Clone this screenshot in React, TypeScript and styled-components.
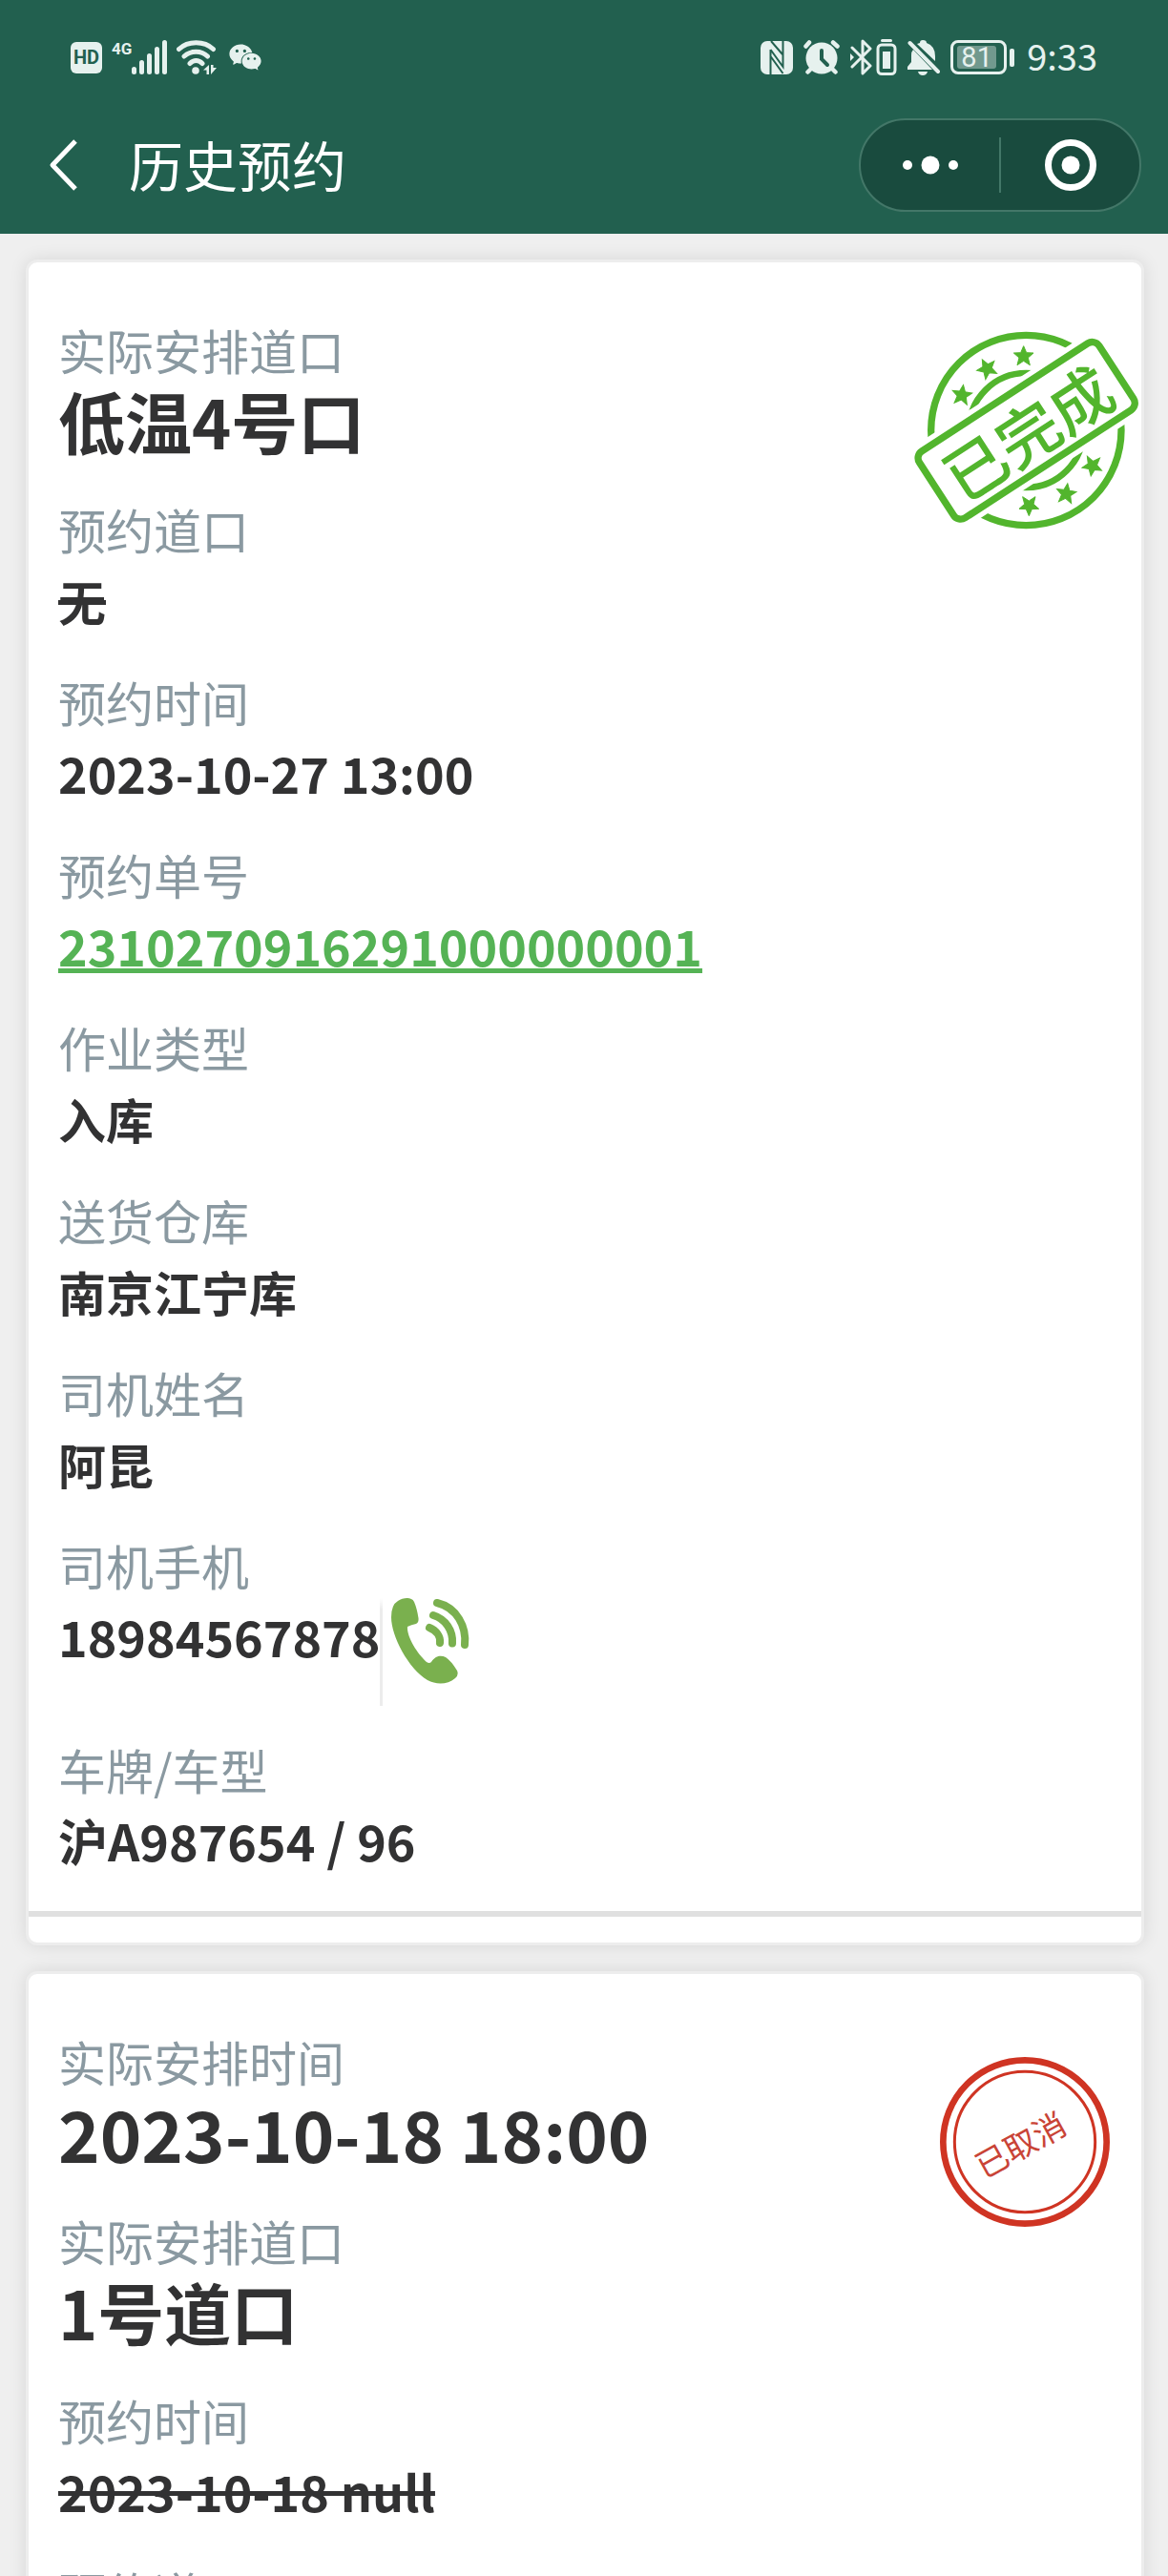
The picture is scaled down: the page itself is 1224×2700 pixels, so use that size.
import React from "react";
import styled, { createGlobalStyle, css } from "styled-components";
import { AiFillWechat } from "react-icons/ai";

const cjk = `"Noto Sans CJK SC", "Noto Sans", sans-serif`;
const glyph = "#e6f1ee";

const GlobalStyle = createGlobalStyle`
  *, *::before, *::after { box-sizing: border-box; }
  body { margin: 0; background: #efefef; font-family: ${cjk}; color: #323233; }
  button { font: inherit; color: inherit; background: none; border: 0; padding: 0; cursor: pointer; }
  svg { display: block; flex: none; }
`;

const Screen = styled.div`
  display: flex;
  flex-direction: column;
  height: 100vh;
  overflow: hidden;
`;

const Header = styled.header`
  flex: none;
  padding-bottom: 20px;
  background: #22604f;
  color: #fff;
`;

const StatusBar = styled.div`
  display: flex;
  align-items: center;
  justify-content: space-between;
  height: 120px;
  padding: 0 74px;
  color: ${glyph};
`;

const StatusGroup = styled.div<{ $gap: number }>`
  display: flex;
  align-items: center;
  gap: ${(p) => p.$gap}px;
`;

const HdBadge = styled.span`
  display: flex;
  align-items: center;
  justify-content: center;
  width: 33px;
  height: 33px;
  border-radius: 6px;
  background: ${glyph};
  color: #22604f;
  font: 700 20px/33px Roboto, sans-serif;
`;

const Signal = styled.span`
  display: flex;
  align-items: flex-start;
  height: 36px;
`;

const Network = styled.span`
  font: 700 17px/18px Roboto, sans-serif;
`;

const Battery = styled.span`
  display: flex;
  align-items: center;
  gap: 3px;
`;

const BatteryBody = styled.span`
  display: flex;
  align-items: center;
  width: 59px;
  height: 36px;
  padding: 4px;
  border: 3px solid ${glyph};
  border-radius: 8px;
`;

const BatteryLevel = styled.span`
  display: flex;
  align-items: center;
  justify-content: center;
  width: 41px;
  height: 24px;
  border-radius: 3px;
  background: #71998e;
  font: 400 29px/24px Roboto, sans-serif;
`;

const BatteryTip = styled.span`
  width: 5px;
  height: 19px;
  border-radius: 2px;
  background: ${glyph};
`;

const Clock = styled.time`
  padding: 0 0 4px 2px;
  font: 400 38px/48px ${cjk};
`;

const NavBar = styled.nav`
  display: flex;
  align-items: center;
  height: 105px;
  padding: 0 28px 0 50px;
`;

const BackButton = styled.button`
  display: flex;
  align-items: center;
  width: 85px;
  height: 80px;
`;

const Title = styled.h1`
  flex: 1;
  margin: 0;
  padding-bottom: 4px;
  font-size: 57px;
  font-weight: 400;
  line-height: 80px;
`;

const Capsule = styled.div`
  display: flex;
  align-items: center;
  width: 296px;
  height: 98px;
  border: 2px solid #437768;
  border-radius: 49px;
  background: #194b3e;
`;

const CapsuleButton = styled.button`
  display: flex;
  flex: 1;
  align-items: center;
  justify-content: center;
  height: 100%;
`;

const CapsuleDivider = styled.span`
  width: 2px;
  height: 58px;
  background: #437768;
`;

const List = styled.main`
  display: flex;
  flex: 1;
  flex-direction: column;
  gap: 27px;
  min-height: 0;
  padding: 27px 25px 27px 27px;
  overflow-y: auto;
  scrollbar-width: none;
`;

const Card = styled.article`
  position: relative;
  flex: none;
  border: 3px solid #ededed;
  border-radius: 12px;
  background: #fff;
  box-shadow: 0 0 18px rgba(0, 0, 0, 0.1);
`;

const Fields = styled.dl`
  margin: 0;
  padding: 56px 31px 3px;
`;

const Field = styled.div<{ $headline?: boolean }>`
  padding-bottom: ${(p) => (p.$headline ? 38 : 31)}px;
`;

const Label = styled.dt`
  color: #8a99a1;
  font-size: 50px;
  line-height: 70px;
`;

type Tone = { $headline?: boolean; $numeric?: boolean; $struck?: boolean };

const Value = styled.dd<Tone>`
  display: flex;
  margin: 0;
  font-size: ${(p) => (p.$headline ? (p.$numeric ? 74 : 70) : p.$numeric ? 52 : 50)}px;
  font-weight: 700;
  line-height: 80px;
  ${(p) =>
    p.$struck &&
    css`
      text-decoration: line-through;
      text-decoration-thickness: 5px;
    `}
`;

const OrderLink = styled.a`
  color: #55b355;
  text-decoration: underline;
  text-decoration-thickness: 5px;
  text-underline-offset: 2px;
  text-decoration-skip-ink: none;
`;

const PhoneDivider = styled.span`
  width: 3px;
  height: 113px;
  background: linear-gradient(#fff, #ececec 12px);
`;

const CallButton = styled.button`
  display: flex;
  align-items: flex-start;
  height: 90px;
  padding-left: 9px;
`;

const CardFooter = styled.footer`
  height: 33px;
  border-top: 6px solid #e0e0e0;
`;

const Stamp = styled.div<{ $top: number; $right: number }>`
  position: absolute;
  top: ${(p) => p.$top}px;
  right: ${(p) => p.$right}px;
`;

const StampText = styled.text`
  font-family: ${cjk};
  text-anchor: middle;
  dominant-baseline: central;
`;

const SignalIcon = () => (
  <svg width="37" height="36" viewBox="0 0 37 36" fill={glyph}>
    <rect x="0" y="28" width="5" height="8" rx="2.5" />
    <rect x="8" y="21" width="5" height="15" rx="2.5" />
    <rect x="16" y="14" width="5" height="22" rx="2.5" />
    <rect x="24" y="7" width="5" height="29" rx="2.5" />
    <rect x="32" y="0" width="5" height="36" rx="2.5" />
  </svg>
);

const WifiIcon = () => (
  <svg width="43" height="36" viewBox="0 0 43 36" fill="none" stroke={glyph} strokeWidth="5" strokeLinecap="round">
    <path d="M2.5 9.500C12 .5 29 .5 38.500 9.500M8 17C15 10.500 26 10.500 32.500 17M14 24.500C18 20.500 23 20.500 27 24.500" />
    <circle cx="20" cy="32" r="3.800" fill={glyph} stroke="none" />
    <path d="M28 31.500L34 26V36H31.500V31.500ZM36 26V36L42 29H38.500V26Z" fill={glyph} stroke="none" />
  </svg>
);

const NfcIcon = () => (
  <svg width="34" height="35" viewBox="0 0 34 35">
    <rect width="34" height="35" rx="7" fill={glyph} />
    <path d="M10.500 9V35M10.500 9L23.500 27V0M10.500 16L23.500 34M11 0L23 14" fill="none" stroke="#22604f" strokeWidth="2" />
  </svg>
);

const AlarmIcon = () => (
  <svg width="38" height="36" viewBox="0 0 38 36" fill="none" stroke={glyph} strokeLinecap="round">
    <circle cx="19" cy="19" r="16.500" fill={glyph} stroke="none" />
    <path d="M2.500 6.500L6 2.500M31 2.500L35.500 6.500M7 31L4.500 33.500M31 31L33.500 33.500" strokeWidth="4.500" />
    <path d="M19 11V20L25 26" stroke="#22604f" strokeWidth="4" />
  </svg>
);

const BluetoothIcon = () => (
  <svg width="49" height="38" viewBox="0 0 49 38" fill="none" stroke={glyph} strokeWidth="3" strokeLinejoin="round" strokeLinecap="round">
    <path d="M2 9L21 28L13 36V2L21 10L2 29" />
    <path d="M0 15L4 19L0 23Z" fill={glyph} stroke="none" />
    <rect x="29" y="6" width="18" height="30.500" rx="4" />
    <rect x="34" y="13" width="8" height="18" fill={glyph} stroke="none" />
    <path d="M33.500 1.500H42.500" />
  </svg>
);

const MutedIcon = () => (
  <svg width="34" height="37" viewBox="0 0 34 37" fill={glyph}>
    <path d="M16 0Q20 0 20 3Q29 6 29 17V22L10 4L13 3Q13 0 16 0Z" />
    <path d="M6 10L26 31H0V28L4 23V16Q4 12 6 10Z" />
    <path d="M11 33H21Q20 37 16 37Q12 37 11 33Z" />
    <path d="M2.500 3L32 33" stroke={glyph} strokeWidth="4" strokeLinecap="round" />
  </svg>
);

const BackIcon = () => (
  <svg width="32" height="54" viewBox="0 0 32 54" fill="none" stroke="#fff" strokeWidth="5">
    <path d="M29 2L5 27L29 52" strokeLinejoin="round" />
  </svg>
);

const MoreIcon = () => (
  <svg width="58" height="20" viewBox="0 0 58 20" fill="#fff">
    <circle cx="5" cy="10" r="5" />
    <circle cx="29" cy="10" r="9.500" />
    <circle cx="53" cy="10" r="5" />
  </svg>
);

const CloseIcon = () => (
  <svg width="56" height="56" viewBox="0 0 56 56">
    <circle cx="28" cy="28" r="23.500" fill="none" stroke="#fff" strokeWidth="7" />
    <circle cx="28" cy="28" r="9.500" fill="#fff" />
  </svg>
);

const CallIcon = () => (
  <svg width="83" height="90" viewBox="0 0 83 90" fill="#7ab04e">
    <path d="M7 3C12 0 21-2 24 4Q27 11 28.500 21Q29 26 26 27Q21 28 17 30C16 40 27 58 37 67Q40 69 42 67C47 60 52 60 57 62Q63 66 69 76Q71 81 67 84C59 91 47 91 38 86C18 74 0 40 0 20Q0 7 7 3Z" />
    <path d="M48 5C69 10 79 30 77 49M44 18C57 22 65 34 64 47.500M40 31C47 34 52 40 51 47" fill="none" stroke="#7ab04e" strokeWidth="8" strokeLinecap="round" />
  </svg>
);

const star = "M0-32L9-11L31-10L14 5L20 28L0 15L-20 28L-14 5L-31-10L-9-11Z";
const stars = [
  { x: 321, y: 520, turn: 8 },
  { x: 400, y: 437, turn: -28 },
  { x: 515, y: 398, turn: 0 },
  { x: 731, y: 743, turn: 188 },
  { x: 649, y: 830, turn: 8 },
  { x: 532, y: 868, turn: 180 },
];

const CompletedStamp = () => (
  <Stamp $top={72} $right={1}>
    <svg width="238" height="208" viewBox="168 319 714 624" fill="none" stroke="#52b52d">
      <circle cx="523" cy="631" r="299" strokeWidth="22" />
      <circle cx="523" cy="631" r="180" strokeWidth="20" />
      {stars.map((s) => (
        <path key={s.x} d={star} transform={`translate(${s.x} ${s.y}) rotate(${s.turn})`} fill="#52b52d" strokeWidth="3" />
      ))}
      <g transform="translate(524 632) rotate(-33)">
        <rect x="-362" y="-152" width="724" height="304" rx="30" fill="#fff" stroke="none" />
        <rect x="-337" y="-125" width="674" height="250" rx="26" strokeWidth="22" />
        <StampText fontSize="196" fontWeight="500" fill="#52b52d" stroke="none">已完成</StampText>
      </g>
    </svg>
  </Stamp>
);

const CancelledStamp = () => (
  <Stamp $top={86} $right={32}>
    <svg width="180" height="180" viewBox="254 520 540 540" fill="none" stroke="#cf3423">
      <circle cx="524" cy="790" r="257" strokeWidth="20" />
      <circle cx="524" cy="790" r="221" strokeWidth="9" />
      <g transform="translate(508 795) rotate(-29)">
        <StampText fontSize="102" fill="#c94437" stroke="none">已取消</StampText>
      </g>
    </svg>
  </Stamp>
);

type Item = {
  label: string;
  value: string;
  headline?: boolean;
  numeric?: boolean;
  struck?: boolean;
  kind?: "link" | "phone";
};

const completed: Item[] = [
  { label: "实际安排道口", value: "低温4号口", headline: true },
  { label: "预约道口", value: "无", struck: true },
  { label: "预约时间", value: "2023-10-27 13:00", numeric: true },
  { label: "预约单号", value: "2310270916291000000001", numeric: true, kind: "link" },
  { label: "作业类型", value: "入库" },
  { label: "送货仓库", value: "南京江宁库" },
  { label: "司机姓名", value: "阿昆" },
  { label: "司机手机", value: "18984567878", numeric: true, kind: "phone" },
  { label: "车牌/车型", value: "沪A987654 / 96", numeric: true },
];

const cancelled: Item[] = [
  { label: "实际安排时间", value: "2023-10-18 18:00", headline: true, numeric: true },
  { label: "实际安排道口", value: "1号道口", headline: true },
  { label: "预约时间", value: "2023-10-18 null", numeric: true, struck: true },
  { label: "预约道口", value: "无", struck: true },
];

const FieldList = ({ items }: { items: Item[] }) => (
  <Fields>
    {items.map((item) => (
      <Field key={item.label} $headline={item.headline}>
        <Label>{item.label}</Label>
        <Value $headline={item.headline} $numeric={item.numeric} $struck={item.struck}>
          {item.kind === "link" ? <OrderLink href="#order">{item.value}</OrderLink> : <span>{item.value}</span>}
          {item.kind === "phone" && (
            <>
              <PhoneDivider />
              <CallButton type="button" aria-label="拨打电话">
                <CallIcon />
              </CallButton>
            </>
          )}
        </Value>
      </Field>
    ))}
  </Fields>
);

export default function App() {
  return (
    <Screen>
      <GlobalStyle />
      <Header>
        <StatusBar>
          <StatusGroup $gap={10}>
            <HdBadge>HD</HdBadge>
            <Signal>
              <Network>4G</Network>
              <SignalIcon />
            </Signal>
            <WifiIcon />
            <AiFillWechat size={38} />
          </StatusGroup>
          <StatusGroup $gap={11}>
            <NfcIcon />
            <AlarmIcon />
            <BluetoothIcon />
            <MutedIcon />
            <Battery>
              <BatteryBody>
                <BatteryLevel>81</BatteryLevel>
              </BatteryBody>
              <BatteryTip />
            </Battery>
            <Clock>9:33</Clock>
          </StatusGroup>
        </StatusBar>
        <NavBar>
          <BackButton type="button" aria-label="返回">
            <BackIcon />
          </BackButton>
          <Title>历史预约</Title>
          <Capsule>
            <CapsuleButton type="button" aria-label="更多">
              <MoreIcon />
            </CapsuleButton>
            <CapsuleDivider />
            <CapsuleButton type="button" aria-label="关闭">
              <CloseIcon />
            </CapsuleButton>
          </Capsule>
        </NavBar>
      </Header>
      <List>
        <Card>
          <FieldList items={completed} />
          <CompletedStamp />
          <CardFooter />
        </Card>
        <Card>
          <FieldList items={cancelled} />
          <CancelledStamp />
          <CardFooter />
        </Card>
      </List>
    </Screen>
  );
}
